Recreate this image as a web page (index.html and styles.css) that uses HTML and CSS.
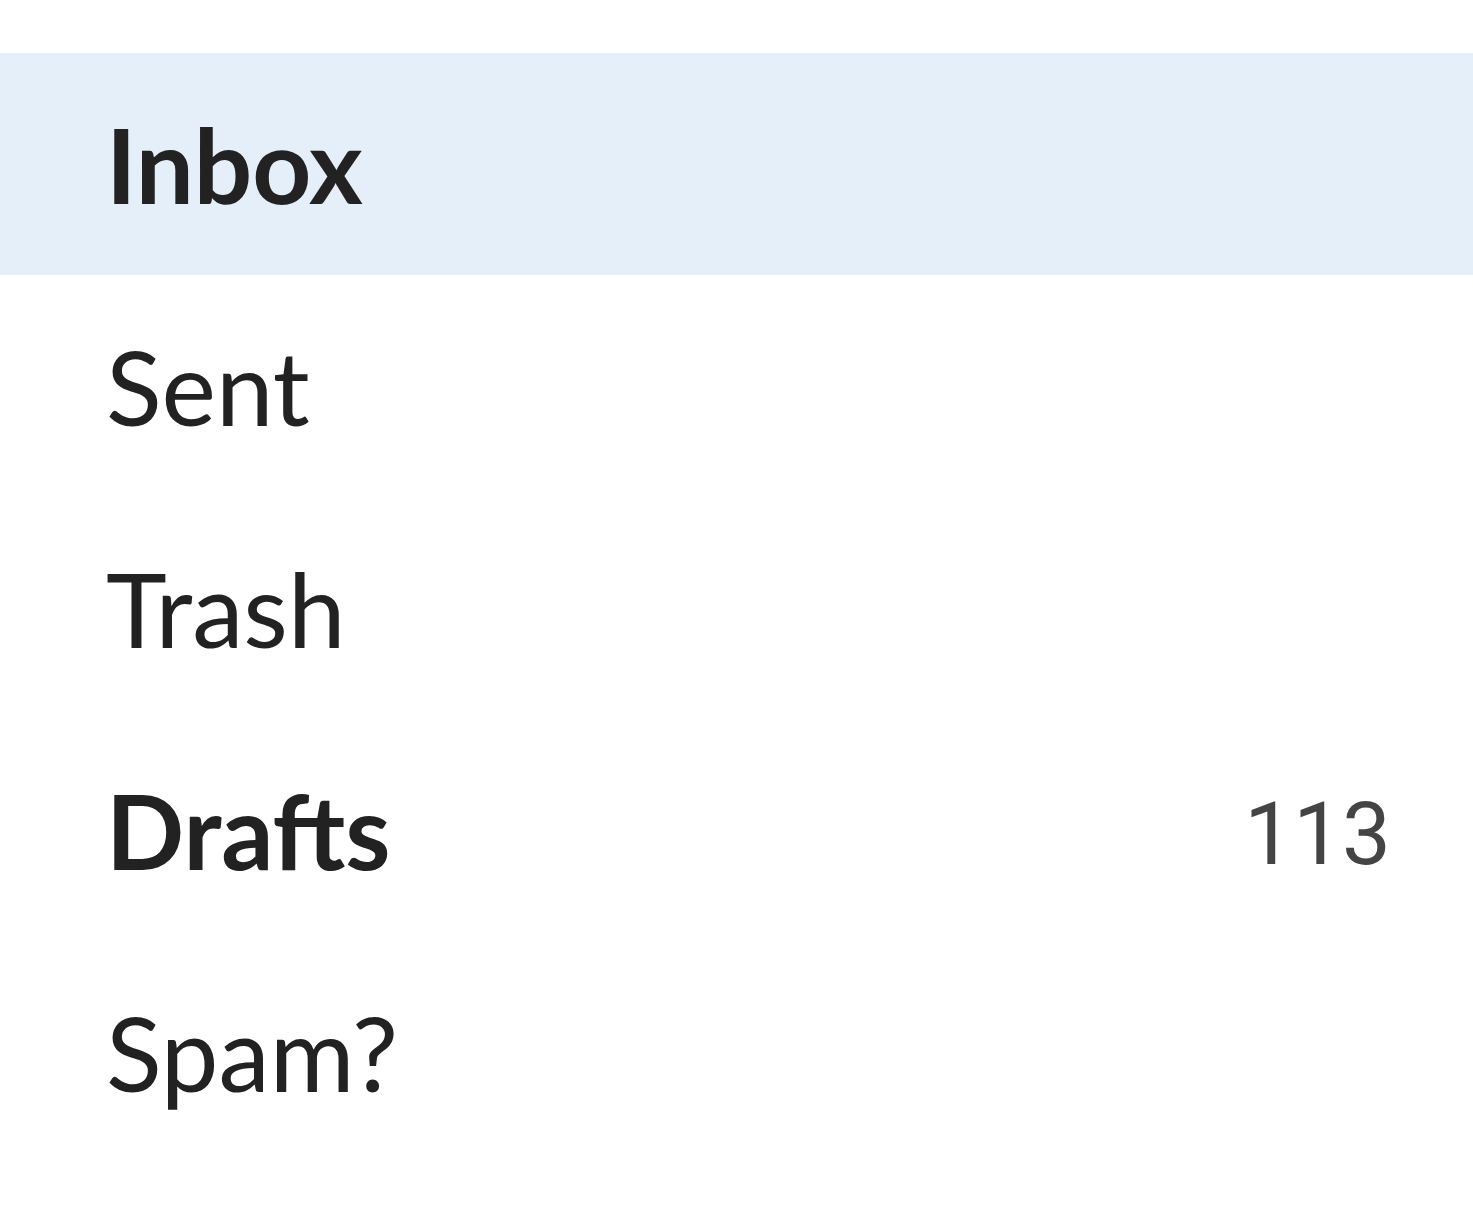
FILE: index.html
```html
<!DOCTYPE html>
<html>
<head>
<meta charset="utf-8">
<link rel="stylesheet" href="styles.css">
</head>
<body>
<ul class="folders">
  <li class="folder active"><span class="name bold">Inbox</span></li>
  <li class="folder"><span class="name">Sent</span></li>
  <li class="folder"><span class="name">Trash</span></li>
  <li class="folder"><span class="name bold">Drafts</span><span class="count">113</span></li>
  <li class="folder"><span class="name">Spam?</span></li>
</ul>
</body>
</html>
```
FILE: styles.css
```css
html, body {
  margin: 0;
  padding: 0;
  background: #ffffff;
}
.folders {
  list-style: none;
  margin: 0;
  padding: 53px 0 0 0;
}
.folder {
  display: flex;
  align-items: center;
  justify-content: space-between;
  height: 222px;
  padding: 0 82px 0 106px;
  font-family: Lato, "Noto Sans", sans-serif;
  font-size: 103px;
  color: #222222;
}
.name {
  line-height: 222px;
}
.folder.active {
  background: #e4eff9;
}
.name.bold {
  font-weight: 700;
}
.count {
  font-family: Roboto, "Liberation Sans", sans-serif;
  font-size: 87px;
  line-height: normal;
  padding-top: 8px;
  color: #444444;
}
```
